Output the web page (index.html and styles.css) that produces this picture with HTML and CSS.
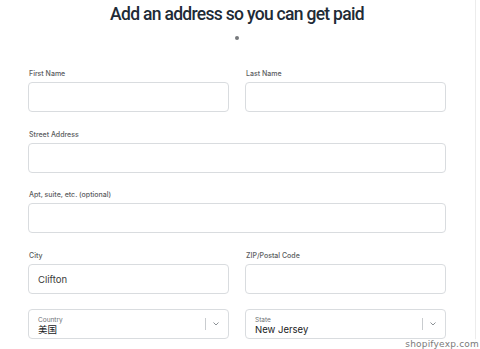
FILE: index.html
```html
<!DOCTYPE html>
<html>
<head>
<meta charset="utf-8">
<link rel="stylesheet" href="styles.css">
</head>
<body>
<div class="frame">
  <h1 class="title">Add an address so you can get paid</h1>
  <div class="dot"></div>
  <form class="form">
    <div class="row two">
      <div class="field"><label>First Name</label><div class="box"></div></div>
      <div class="field"><label>Last Name</label><div class="box"></div></div>
    </div>
    <div class="row">
      <div class="field"><label>Street Address</label><div class="box"></div></div>
    </div>
    <div class="row">
      <div class="field"><label>Apt, suite, etc. (optional)</label><div class="box"></div></div>
    </div>
    <div class="row two">
      <div class="field"><label>City</label><div class="box"><span class="value">Clifton</span></div></div>
      <div class="field"><label>ZIP/Postal Code</label><div class="box"></div></div>
    </div>
    <div class="row two selects">
      <div class="select">
        <div class="sel-text"><span class="sel-label">Country</span><span class="sel-value">美国</span></div>
        <span class="sep"></span>
        <svg class="chev" width="8" height="6" viewBox="0 0 8 6"><path d="M1.5 1.5 L4 4 L6.5 1.5" fill="none" stroke="#8c9196" stroke-width="1"/></svg>
      </div>
      <div class="select">
        <div class="sel-text"><span class="sel-label">State</span><span class="sel-value">New Jersey</span></div>
        <span class="sep"></span>
        <svg class="chev" width="8" height="6" viewBox="0 0 8 6"><path d="M1.5 1.5 L4 4 L6.5 1.5" fill="none" stroke="#8c9196" stroke-width="1"/></svg>
      </div>
    </div>
  </form>
</div>
<div class="watermark">shopifyexp.com</div>
</body>
</html>
```
FILE: styles.css
```css
* { box-sizing: border-box; }
html, body { margin: 0; padding: 0; background: #fff; }
body {
  width: 480px;
  height: 349px;
  overflow: hidden;
  font-family: Inter, "Noto Sans", "Liberation Sans", "Noto Sans CJK SC", sans-serif;
  color: #212b36;
}
.frame {
  width: 476px;
  height: 349px;
  border-right: 1px solid #ececec;
  padding: 3px 29px 0 28px;
}
.title {
  margin: 0;
  text-align: center;
  font-family: Roboto, "Liberation Sans", sans-serif;
  font-size: 17.5px;
  font-weight: 500;
  line-height: 22px;
  letter-spacing: -0.7px;
  color: #212b36;
}
.dot {
  width: 4px;
  height: 4px;
  border-radius: 50%;
  background: #77797c;
  margin: 11px auto 0;
}
.form {
  display: flex;
  flex-direction: column;
  gap: 17.5px;
  margin-top: 29px;
}
.row { display: flex; gap: 16px; }
.row.two > * { flex: 1 1 0; }
.row.selects { margin-top: -2.5px; }
.field { display: flex; flex-direction: column; flex: 1; }
label {
  font-size: 7px;
  font-weight: 500;
  line-height: 10px;
  color: #5a5c5e;
  margin-bottom: 3px;
  padding-left: 1px;
}
.box {
  height: 30px;
  border: 1px solid #d9dcdf;
  border-radius: 4px;
  display: flex;
  align-items: center;
  padding: 0 9px;
}
.value { font-size: 9.5px; color: #3a3a3a; padding-top: 2px; }
.select {
  height: 30px;
  border: 1px solid #d9dcdf;
  border-radius: 4px;
  display: flex;
  align-items: center;
  padding: 0 8px 0 9px;
}
.sel-text { flex: 1; display: flex; flex-direction: column; padding-top: 4px; }
.sel-label { font-size: 6.5px; line-height: 8px; color: #6d7175; }
.sel-value { font-size: 9.5px; line-height: 11px; color: #202223; }
.sep { width: 1px; height: 12px; background: #c9cccf; margin-right: 6px; }
.chev { display: block; }
.watermark {
  position: absolute;
  right: 1px;
  bottom: 0px;
  font-family: "DejaVu Sans", sans-serif;
  font-size: 9px;
  color: #7a7a7a;
  background: rgba(255,255,255,0.8);
  letter-spacing: 0.2px;
}
```
